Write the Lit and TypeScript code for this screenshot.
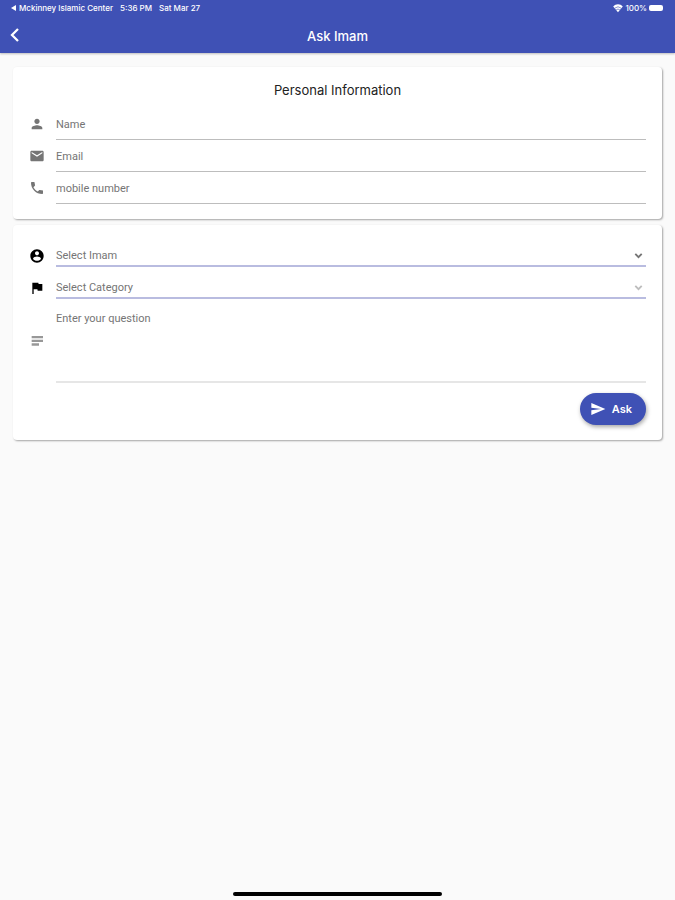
import { LitElement, html, css, svg } from "lit";
import { customElement, property } from "lit/decorators.js";

const icons: Record<string, unknown> = {
  person: svg`<path d="M12 12c2.200 0 4-1.800 4-4s-1.800-4-4-4-4 1.800-4 4 1.800 4 4 4zm0 2c-2.700 0-8 1.340-8 4v2h16v-2c0-2.660-5.300-4-8-4z"/>`,
  mail: svg`<path d="M20 4H4c-1.100 0-2 .9-2 2v12c0 1.100.9 2 2 2h16c1.100 0 2-.9 2-2V6c0-1.100-.9-2-2-2zm0 4l-8 5-8-5V6l8 5 8-5v2z"/>`,
  phone: svg`<path d="M6.620 10.790c1.440 2.830 3.760 5.140 6.590 6.590l2.200-2.200c.27-.27.67-.36 1.020-.24 1.120.37 2.330.57 3.570.57.55 0 1 .45 1 1V20c0 .55-.45 1-1 1C10.610 21 3 13.390 3 4c0-.55.45-1 1-1h3.500c.55 0 1 .45 1 1 0 1.250.2 2.450.57 3.570.11.35.03.74-.25 1.020l-2.200 2.200z"/>`,
  account: svg`<path d="M12 2C6.480 2 2 6.480 2 12s4.480 10 10 10 10-4.480 10-10S17.520 2 12 2zm0 3c1.660 0 3 1.340 3 3s-1.340 3-3 3-3-1.340-3-3 1.340-3 3-3zm0 14.200c-2.500 0-4.710-1.280-6-3.220.03-1.990 4-3.080 6-3.080 1.990 0 5.970 1.090 6 3.080-1.290 1.940-3.500 3.220-6 3.220z"/>`,
  flag: svg`<path d="M14.400 6L14 4H5v17h2v-7h5.600l.4 2h7V6z"/>`,
  notes: svg`<path d="M4 4.500h17v3.500H4zM4 10h17v3.500H4zM4 15.500h11v3.500H4z" opacity=".75"/>`,
  send: svg`<path d="M2 21l21-9L2 3v7l15 2-15 2z"/>`,
  chevron: svg`<path d="M5 8.500l7 7 7-7" fill="none" stroke="currentColor" stroke-width="4"/>`,
  back: svg`<path d="M18 3L9 12l9 9" fill="none" stroke="currentColor" stroke-width="3.400"/>`,
  wifi: svg`<path d="M12 22L0.500 8.500C7 1 17 1 23.500 8.500z"/><path d="M4 12.500q8-7 16 0M7.500 16.500q4.500-4 9 0" fill="none" stroke="#3f51b5" stroke-width="1.500"/>`,
};

@customElement("app-icon")
class AppIcon extends LitElement {
  @property() name = "person";
  static styles = css`
    :host { display: inline-flex; width: 16px; height: 16px; flex: none; }
    svg { width: 100%; height: 100%; fill: currentColor; }
  `;
  render() {
    return html`<svg viewBox="0 0 24 24" aria-hidden="true">${icons[this.name]}</svg>`;
  }
}

@customElement("app-root")
class AppRoot extends LitElement {
  static styles = css`
    :host {
      display: flex;
      flex-direction: column;
      min-height: 100vh;
      background: #fafafa;
      color: #222;
      font-family: Inter, "Liberation Sans", sans-serif;
      font-size: 11px;
      line-height: 16px;
    }
    * { box-sizing: border-box; }
    header {
      background: #3f51b5;
      color: #fff;
      box-shadow: 0 1px 2px rgba(0, 0, 0, 0.25);
    }
    .status {
      display: flex;
      justify-content: space-between;
      padding: 0 12px 0 11px;
      font-size: 8px;
      font-weight: 500;
    }
    .status div { display: flex; align-items: center; gap: 7px; }
    .status .power { gap: 2px; }
    .tri {
      border: 3px solid transparent;
      border-right: 5px solid #fff;
      border-left: 0;
      margin-right: 3px;
      display: inline-block;
    }
    .wifi { width: 10px; height: 10px; }
    .battery { width: 14px; height: 6px; border-radius: 2px; background: #fff; }
    .bar {
      display: grid;
      grid-template-columns: 32px 1fr 32px;
      align-items: center;
      height: 37px;
      padding-top: 2px;
    }
    h1, h2 { margin: 0; font-size: 13px; font-weight: 500; text-align: center; }
    h2 { font-weight: 400; margin-bottom: 10px; }
    button { border: 0; font: inherit; color: inherit; cursor: pointer; }
    .back { display: flex; background: none; padding: 0 0 2px 6px; }
    main {
      display: flex;
      flex-direction: column;
      flex: 1;
      gap: 6px;
      padding: 14px 13px;
    }
    .card {
      background: #fff;
      border-radius: 4px;
      padding: 15px 16px;
      box-shadow: 1px 1px 2px rgba(0, 0, 0, 0.35);
    }
    .ask-card { padding-top: 10px; }
    .row {
      display: grid;
      grid-template-columns: 16px 1fr;
      column-gap: 11px;
      align-items: center;
      color: #757575;
    }
    .control { position: relative; display: flex; }
    input, select, textarea {
      appearance: none;
      width: 100%;
      height: 32px;
      margin: 0;
      padding: 2px 0 0;
      border: 0;
      border-bottom: 1px solid #bdbdbd;
      border-radius: 0;
      background: transparent;
      color: #757575;
      font: 11px/16px Roboto, "Liberation Sans", sans-serif;
      outline: none;
      resize: none;
    }
    ::placeholder { color: #757575; opacity: 1; }
    select { border-bottom: 2px solid #b9bce0; padding-top: 12px; }
    textarea { height: 84px; padding-top: 12px; border-bottom: 2px solid #e6e6e6; }
    .dark { color: #000; }
    .pick > app-icon { margin-top: 10px; }
    .arrow {
      position: absolute;
      right: 2px;
      bottom: 6px;
      width: 11px;
      height: 11px;
      color: #757575;
      pointer-events: none;
    }
    .arrow.faint { color: #bdbdbd; }
    .actions { display: flex; justify-content: flex-end; margin-top: 10px; }
    .ask {
      display: flex;
      align-items: center;
      gap: 6px;
      height: 32px;
      padding: 0 14px 0 10px;
      border-radius: 16px;
      background: #3f51b5;
      color: #fff;
      font-weight: 600;
      box-shadow: 1px 2px 4px rgba(0, 0, 0, 0.35);
    }
    footer { display: flex; justify-content: center; padding-bottom: 4px; }
    .home { width: 31%; height: 4px; border-radius: 2px; background: #000; }
  `;

  private field(icon: string, label: string, type: string) {
    return html`<div class="row">
      <app-icon name=${icon}></app-icon>
      <input type=${type} aria-label=${label} placeholder=${label} />
    </div>`;
  }

  private picker(icon: string, label: string, faint: string) {
    return html`<div class="row pick">
      <app-icon class="dark" name=${icon}></app-icon>
      <div class="control">
        <select aria-label=${label}><option>${label}</option></select>
        <app-icon class="arrow ${faint}" name="chevron"></app-icon>
      </div>
    </div>`;
  }

  render() {
    return html`
      <header>
        <div class="status">
          <div>
            <span><i class="tri"></i>Mckinney Islamic Center</span>
            <span>5:36 PM</span>
            <span>Sat Mar 27</span>
          </div>
          <div class="power">
            <app-icon class="wifi" name="wifi"></app-icon>
            <span>100%</span>
            <i class="battery"></i>
          </div>
        </div>
        <div class="bar">
          <button class="back" aria-label="Back"><app-icon name="back"></app-icon></button>
          <h1>Ask Imam</h1>
        </div>
      </header>
      <main>
        <section class="card">
          <h2>Personal Information</h2>
          ${this.field("person", "Name", "text")}
          ${this.field("mail", "Email", "email")}
          ${this.field("phone", "mobile number", "tel")}
        </section>
        <section class="card ask-card">
          ${this.picker("account", "Select Imam", "")}
          ${this.picker("flag", "Select Category", "faint")}
          <div class="row">
            <app-icon name="notes"></app-icon>
            <textarea aria-label="Enter your question" placeholder="Enter your question"></textarea>
          </div>
          <div class="actions">
            <button class="ask"><app-icon name="send"></app-icon>Ask</button>
          </div>
        </section>
      </main>
      <footer><div class="home"></div></footer>
    `;
  }
}
